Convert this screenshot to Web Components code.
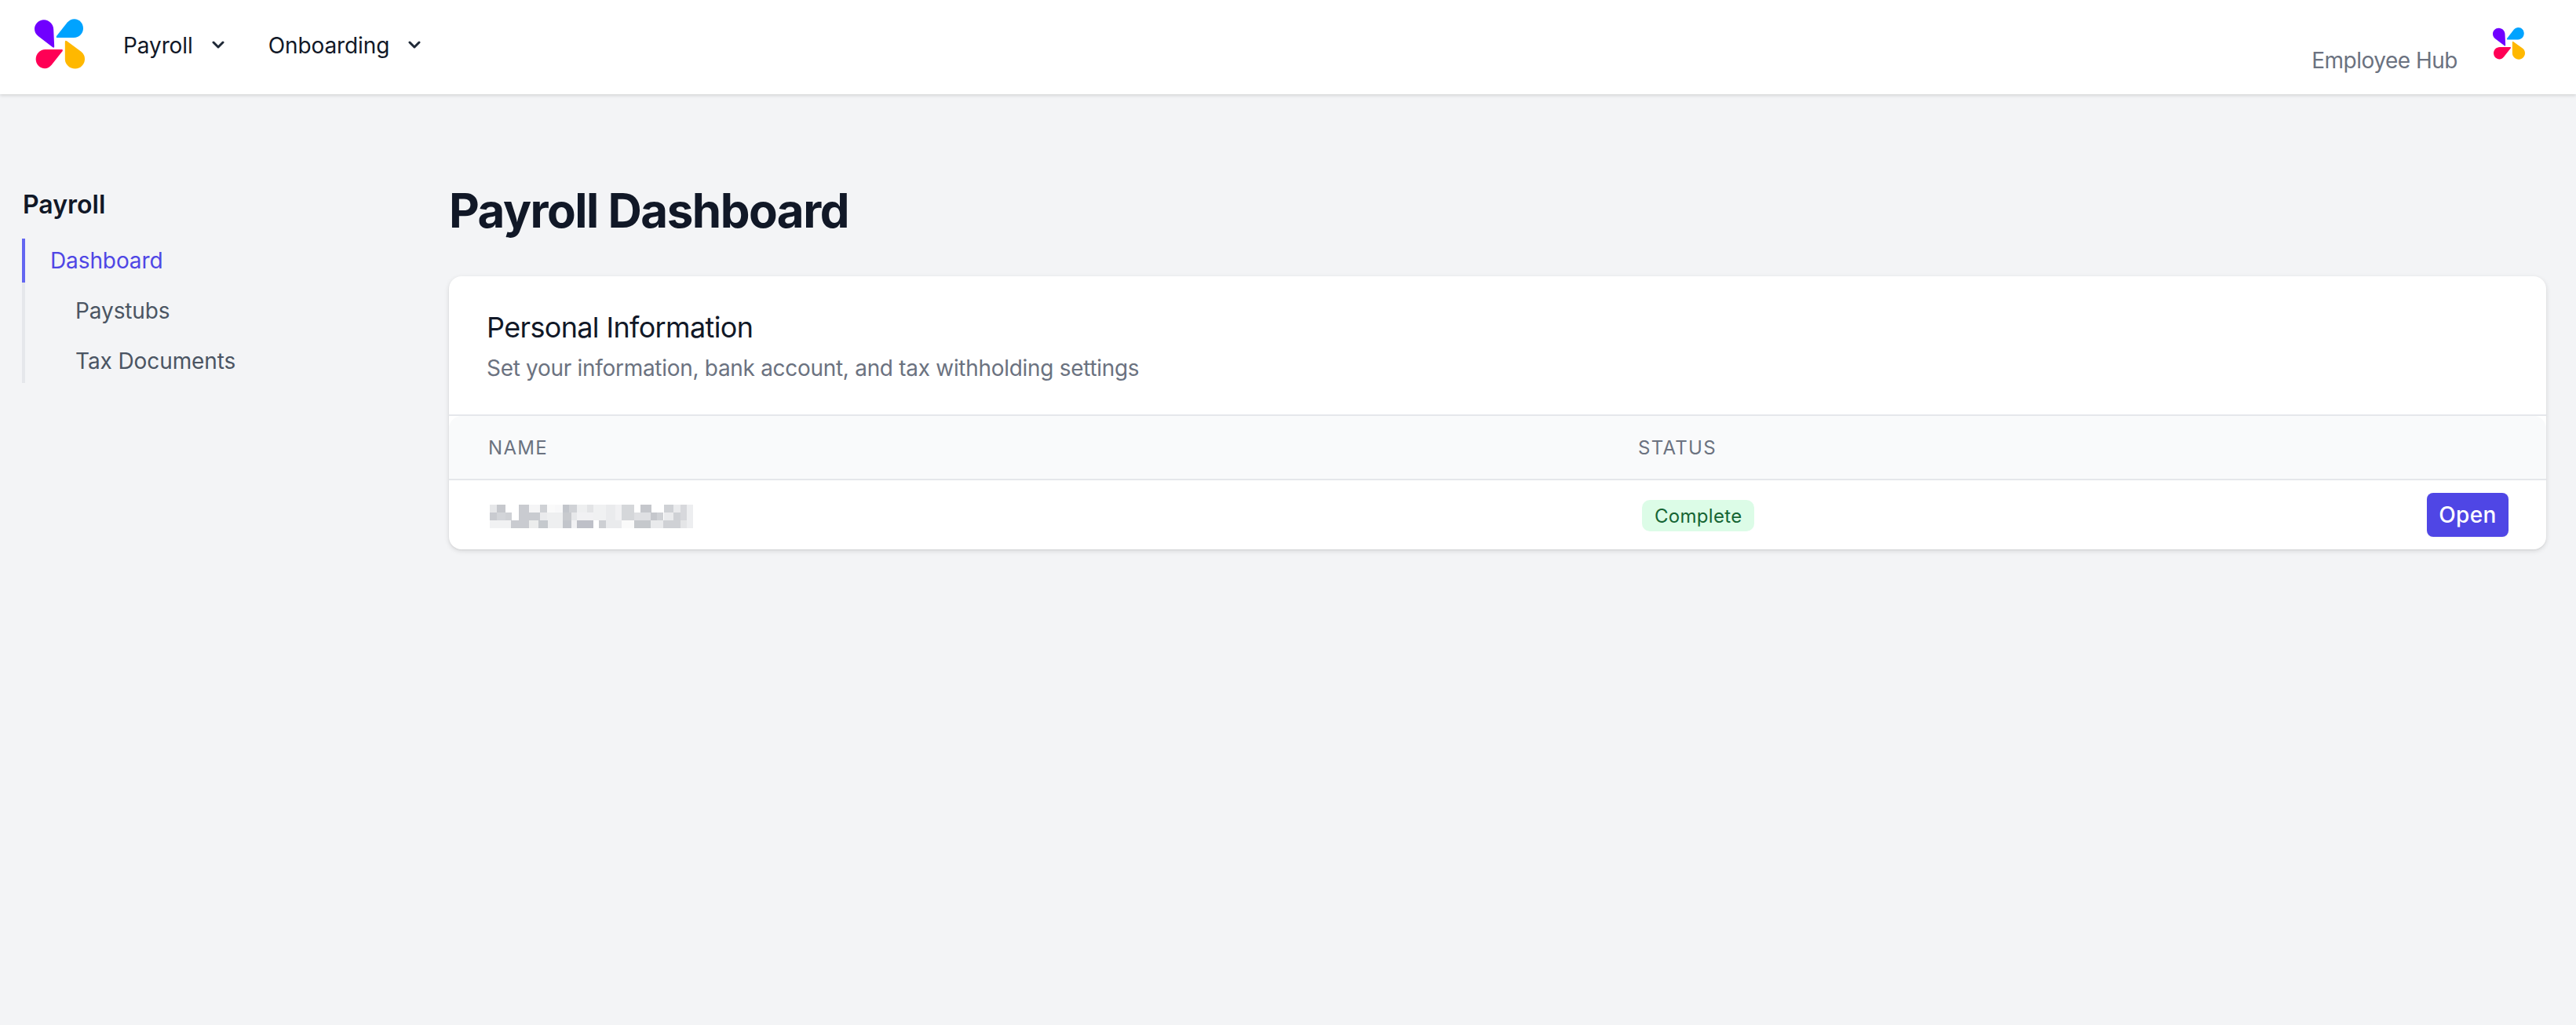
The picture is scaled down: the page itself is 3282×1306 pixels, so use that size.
<!DOCTYPE html>
<html lang="en">
<head>
<meta charset="utf-8">
<title>Payroll Dashboard</title>
<style>
    html, body { margin: 0; padding: 0; }
    body {
        min-height: 1306px;
        background: #f3f4f6;
        font-family: Inter, "Liberation Sans", sans-serif;
        color: #111827;
    }
</style>
</head>
<body>
<top-nav>
    <logo-mark slot="brand" size="64"></logo-mark>
    <nav-menu slot="menus" label="Payroll"></nav-menu>
    <nav-menu slot="menus" label="Onboarding"></nav-menu>
    <span slot="hub">Employee Hub</span>
    <logo-mark slot="hub-logo" size="41"></logo-mark>
</top-nav>
<page-layout>
    <side-nav slot="side" heading="Payroll">
        <side-link active>Dashboard</side-link>
        <side-link>Paystubs</side-link>
        <side-link>Tax Documents</side-link>
    </side-nav>
    <page-heading>Payroll Dashboard</page-heading>
    <info-card heading="Personal Information" description="Set your information, bank account, and tax withholding settings">
        <table-row header>
            <span slot="name">NAME</span>
            <span slot="status">STATUS</span>
        </table-row>
        <table-row>
            <pixel-block slot="name"></pixel-block>
            <status-badge slot="status">Complete</status-badge>
            <action-button slot="action">Open</action-button>
        </table-row>
    </info-card>
</page-layout>

<script>
// Logo: four drops, drawn on a 270 unit square cropped to the marks
class LogoMark extends HTMLElement {
    connectedCallback() {
        const size = this.getAttribute('size') || 64;
        this.attachShadow({ mode: 'open' });
        this.shadowRoot.innerHTML = `
            <style>
                :host { display: block; width: ${size}px; height: ${size}px; }
                svg { display: block; width: 100%; height: 100%; }
            </style>
            <svg viewBox="42 42 193 192" aria-hidden="true">
                <path fill="#7000ff" d="M112 151 L56 108 C47 101 42 91 42 80 C42 61 58 45 78 45 C98 45 115 62 115 82 L118 148 Q118 155 112 151 Z"/>
                <path fill="#00a3ff" d="M127 107 L168 55 C176 46 185 42 195 42 C214 42 229 58 229 78 C229 98 213 114 193 114 L130 114 Q123 114 127 107 Z"/>
                <path fill="#ff0055" d="M149 166 L108 218 C100 228 92 232 82 232 C62 232 47 216 47 196 C47 176 63 159 83 159 L146 159 Q153 159 149 166 Z"/>
                <path fill="#ffb800" d="M159 131 Q159 122 166 127 L222 168 C231 175 235 185 235 196 C235 216 219 233 198 233 C176 233 159 216 159 196 Z"/>
            </svg>
        `;
    }
}

class TopNav extends HTMLElement {
    constructor() {
        super();
        this.attachShadow({ mode: 'open' });
        this.shadowRoot.innerHTML = `
            <style>
                :host {
                    display: flex;
                    justify-content: space-between;
                    height: 120px;
                    box-sizing: border-box;
                    padding: 0 65px 0 44px;
                    background: #fff;
                    box-shadow: 0 2px 4px rgba(0, 0, 0, 0.12);
                    position: relative;
                }
                .left { display: flex; align-items: center; gap: 49px; padding-bottom: 8px; }
                .menus { display: flex; gap: 56px; padding-top: 4px; }
                .right { display: flex; align-items: flex-start; gap: 45px; padding-top: 35px; }
                .hub { font-size: 28px; line-height: 40px; letter-spacing: -0.5px; color: #6b7280; padding-top: 22px; }
            </style>
            <div class="left">
                <slot name="brand"></slot>
                <div class="menus"><slot name="menus"></slot></div>
            </div>
            <div class="right">
                <div class="hub"><slot name="hub"></slot></div>
                <slot name="hub-logo"></slot>
            </div>
        `;
    }
}

class NavMenu extends HTMLElement {
    connectedCallback() {
        this.attachShadow({ mode: 'open' });
        this.shadowRoot.innerHTML = `
            <style>
                :host {
                    display: flex;
                    align-items: center;
                    gap: 24px;
                    font-size: 28px;
                    line-height: 40px;
                    font-weight: 400;
                    letter-spacing: -0.1px;
                    color: #111827;
                }
                svg { width: 16px; height: 10px; display: block; margin-top: -2px; }
            </style>
            <span>${this.getAttribute('label')}</span>
            <svg viewBox="0 0 16 10" fill="none" stroke="#1f2937" stroke-width="3" stroke-linecap="round" stroke-linejoin="round">
                <path d="M2 2 L8 8 L14 2"/>
            </svg>
        `;
    }
}

class PageLayout extends HTMLElement {
    constructor() {
        super();
        this.attachShadow({ mode: 'open' });
        this.shadowRoot.innerHTML = `
            <style>
                :host { display: flex; padding: 112px 38px 0 28px; }
                .side { width: 544px; flex: none; }
                .main { flex: 1; min-width: 0; }
            </style>
            <div class="side"><slot name="side"></slot></div>
            <div class="main"><slot></slot></div>
        `;
    }
}

class SideNav extends HTMLElement {
    connectedCallback() {
        this.attachShadow({ mode: 'open' });
        this.shadowRoot.innerHTML = `
            <style>
                :host { display: block; }
                h3 {
                    margin: 0 0 15px 1px;
                    padding-top: 1px;
                    font-size: 32px;
                    line-height: 56px;
                    font-weight: 600;
                    color: #111827;
                }
                .list {
                    display: flex;
                    flex-direction: column;
                    gap: 8px;
                    border-left: 4px solid #e5e7eb;
                }
            </style>
            <h3>${this.getAttribute('heading')}</h3>
            <div class="list"><slot></slot></div>
        `;
    }
}

class SideLink extends HTMLElement {
    constructor() {
        super();
        this.attachShadow({ mode: 'open' });
        this.shadowRoot.innerHTML = `
            <style>
                :host {
                    display: flex;
                    align-items: center;
                    height: 56px;
                    padding-left: 64px;
                    font-size: 28px;
                    letter-spacing: -0.1px;
                    color: #4b5563;
                }
                :host([active]) {
                    margin-left: -4px;
                    border-left: 4px solid #6366f1;
                    padding-left: 32px;
                    color: #4f46e5;
                }
            </style>
            <slot></slot>
        `;
    }
}

class PageHeading extends HTMLElement {
    constructor() {
        super();
        this.attachShadow({ mode: 'open' });
        this.shadowRoot.innerHTML = `
            <style>
                :host {
                    display: block;
                    font-size: 60px;
                    line-height: 72px;
                    font-weight: 700;
                    letter-spacing: -1.5px;
                    color: #111827;
                    margin-bottom: 48px;
                }
            </style>
            <slot></slot>
        `;
    }
}

class InfoCard extends HTMLElement {
    connectedCallback() {
        this.attachShadow({ mode: 'open' });
        this.shadowRoot.innerHTML = `
            <style>
                :host {
                    display: block;
                    background: #fff;
                    border-radius: 16px;
                    box-shadow: 0 2px 6px rgba(0, 0, 0, 0.12), 0 1px 2px rgba(0, 0, 0, 0.06);
                }
                header {
                    box-sizing: border-box;
                    padding: 38px 48px 0;
                    border-bottom: 2px solid #e5e7eb;
                    height: 178px;
                }
                h3 { margin: 0; font-size: 36px; line-height: 54px; font-weight: 400; letter-spacing: -0.65px; color: #111827; }
                p { margin: 5px 0 0; font-size: 28px; line-height: 40px; letter-spacing: -0.3px; color: #6b7280; }
            </style>
            <header>
                <h3>${this.getAttribute('heading')}</h3>
                <p>${this.getAttribute('description')}</p>
            </header>
            <slot></slot>
        `;
    }
}

class TableRow extends HTMLElement {
    constructor() {
        super();
        this.attachShadow({ mode: 'open' });
        this.shadowRoot.innerHTML = `
            <style>
                :host {
                    display: grid;
                    grid-template-columns: 1467px 1fr auto;
                    align-items: center;
                    padding: 16px 48px 16px 0;
                    min-height: 56px;
                }
                :host([header]) {
                    padding-top: 0;
                    padding-bottom: 0;
                    height: 80px;
                    min-height: 0;
                    background: #f9fafb;
                    border-radius: 16px 16px 0 0;
                    border-bottom: 2px solid #e5e7eb;
                    font-size: 24px;
                    letter-spacing: 1.3px;
                    color: #6b7280;
                }
                .cell { padding-left: 48px; }
                :host([header]) .cell:nth-child(2) { padding-left: 50px; }
            </style>
            <div class="cell"><slot name="name"></slot></div>
            <div class="cell"><slot name="status"></slot></div>
            <div><slot name="action"></slot></div>
        `;
    }
}

// Redacted name: the blur tiles, read off the reference
class PixelBlock extends HTMLElement {
    connectedCallback() {
        const rows = [
            [[0, 9, '#e6e7e9'], [9, 11, '#c6c8cd'], [37, 13, '#c9cbd0'], [50, 14, '#f5f5f6'], [64, 9, '#cfd1d5'], [73, 10, '#fafafa'], [83, 10, '#f8f8f9'], [93, 8, '#c2c5cb'], [101, 10, '#d0d2d6'], [111, 13, '#eeeff0'], [124, 8, '#e3e4e6'], [132, 16, '#f0f1f2'], [148, 12, '#eaebed'], [160, 8, '#f1f1f3'], [168, 16, '#d5d7da'], [192, 14, '#c5c7cc'], [222, 12, '#cfd1d5'], [234, 9, '#eaebed'], [243, 8, '#d7d8dc'], [251, 8, '#edeef0']],
            [[0, 9, '#c9cbd0'], [9, 11, '#d3d5d9'], [20, 8, '#cfd1d5'], [37, 13, '#c9cbd0'], [50, 14, '#c9cbd0'], [64, 9, '#eaebed'], [73, 20, '#eeeff0'], [93, 11, '#c8cace'], [104, 7, '#e7e8ea'], [111, 13, '#f1f1f3'], [124, 8, '#f1f1f3'], [132, 16, '#f0f1f2'], [148, 12, '#eaebed'], [160, 8, '#f1f1f3'], [168, 16, '#d5d7da'], [184, 21, '#dfe0e3'], [205, 8, '#c5c7cc'], [213, 8, '#cfd1d5'], [222, 12, '#eaebed'], [234, 9, '#cfd1d5'], [243, 8, '#d7d8dc'], [251, 8, '#edeef0']],
            [[0, 27, '#f1f2f3'], [27, 23, '#c9cbd0'], [50, 12, '#eceded'], [62, 12, '#c5c9cd'], [74, 19, '#eeeff0'], [93, 11, '#c2c5cb'], [104, 7, '#f1f1f3'], [111, 21, '#bec0c8'], [139, 9, '#cdcfd3'], [148, 20, '#eaebed'], [168, 16, '#fafafa'], [184, 21, '#c5c8cc'], [205, 16, '#e9eaec'], [221, 22, '#cfd1d5'], [243, 8, '#e4e5e7'], [251, 8, '#edeef0']]
        ];
        const rects = rows.map((row, y) => row.map(([x, w, c]) =>
            `<rect x="${x}" y="${y * 10}" width="${w}" height="10" fill="${c}"/>`).join('')).join('');
        this.attachShadow({ mode: 'open' });
        this.shadowRoot.innerHTML = `
            <style>
                :host { display: block; width: 259px; height: 30px; margin: 4px 0 0 4px; }
                svg { display: block; }
            </style>
            <svg width="259" height="30" viewBox="0 0 259 30" shape-rendering="crispEdges">${rects}</svg>
        `;
    }
}

class StatusBadge extends HTMLElement {
    constructor() {
        super();
        this.attachShadow({ mode: 'open' });
        this.shadowRoot.innerHTML = `
            <style>
                :host {
                    display: block;
                    width: fit-content;
                    margin: 2px 0 0 5px;
                    padding: 0 16px;
                    height: 40px;
                    line-height: 42px;
                    border-radius: 10px;
                    background: #dcfce7;
                    color: #166534;
                    font-size: 24px;
                    font-weight: 400;
                    letter-spacing: 0.3px;
                }
            </style>
            <slot></slot>
        `;
    }
}

class ActionButton extends HTMLElement {
    constructor() {
        super();
        this.attachShadow({ mode: 'open' });
        this.shadowRoot.innerHTML = `
            <style>
                :host {
                    display: flex;
                    align-items: center;
                    justify-content: center;
                    width: 104px;
                    height: 56px;
                    border-radius: 8px;
                    background: #4f46e5;
                    color: #fff;
                    font-size: 28px;
                    font-weight: 500;
                    letter-spacing: 0.3px;
                    box-shadow: 0 1px 2px rgba(0, 0, 0, 0.05);
                }
            </style>
            <slot></slot>
        `;
    }
}

customElements.define('logo-mark', LogoMark);
customElements.define('top-nav', TopNav);
customElements.define('nav-menu', NavMenu);
customElements.define('page-layout', PageLayout);
customElements.define('side-nav', SideNav);
customElements.define('side-link', SideLink);
customElements.define('page-heading', PageHeading);
customElements.define('info-card', InfoCard);
customElements.define('table-row', TableRow);
customElements.define('pixel-block', PixelBlock);
customElements.define('status-badge', StatusBadge);
customElements.define('action-button', ActionButton);
</script>
</body>
</html>
